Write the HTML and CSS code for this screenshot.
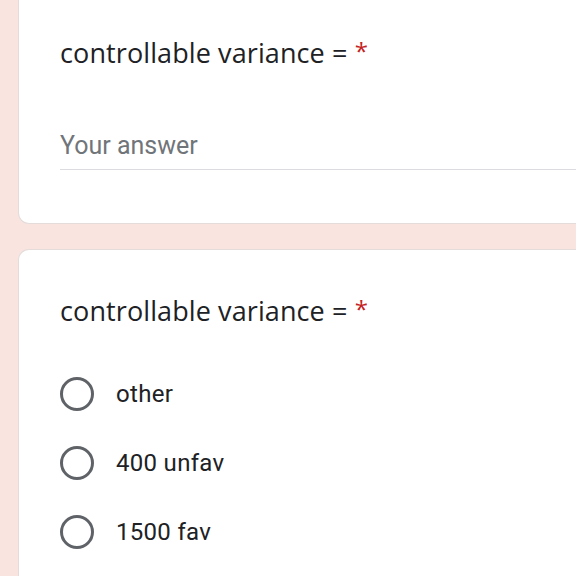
FILE: index.html
```html
<!DOCTYPE html>
<html>
<head>
<meta charset="utf-8">
<link rel="stylesheet" href="styles.css">
</head>
<body>
<div class="page">
  <div class="card card-first">
    <div class="title">controllable variance = <span class="req">*</span></div>
    <div class="answer">Your answer</div>
  </div>
  <div class="card card-second">
    <div class="title">controllable variance = <span class="req">*</span></div>
    <div class="options">
      <div class="option"><span class="radio"></span><span class="label">other</span></div>
      <div class="option"><span class="radio"></span><span class="label">400 unfav</span></div>
      <div class="option"><span class="radio"></span><span class="label">1500 fav</span></div>
    </div>
  </div>
</div>
</body>
</html>
```
FILE: styles.css
```css
html, body {
  margin: 0;
  padding: 0;
  background: #f9e4e0;
  overflow: hidden;
}
.page {
  width: 576px;
  height: 600px;
  overflow: hidden;
  display: flex;
  flex-direction: column;
  gap: 25px;
  padding-left: 18px;
  box-sizing: border-box;
  margin-top: -20px;
}
.card {
  background: #ffffff;
  border: 1.5px solid #e3dcda;
  border-right: none;
  border-radius: 11px 0 0 11px;
  padding-left: 41px;
  flex-shrink: 0;
  box-sizing: border-box;
}
.card-first {
  height: 244px;
  padding-top: 53px;
}
.card-second {
  padding-top: 42px;
  height: 440px;
  border-bottom: none;
}
.title {
  font-family: "Open Sans", sans-serif;
  font-size: 27px;
  color: #202124;
  line-height: 34px;
  letter-spacing: 0.1px;
}
.req {
  color: #c5221f;
  font-size: 24px;
  vertical-align: 3px;
}
.answer {
  margin-top: 60px;
  font-family: Roboto, sans-serif;
  font-size: 25px;
  color: #70757a;
  line-height: 32px;
  padding-bottom: 7px;
  border-bottom: 1.5px solid #dadce0;
}
.options {
  margin-top: 49px;
  display: flex;
  flex-direction: column;
  gap: 35px;
}
.option {
  display: flex;
  align-items: center;
  height: 34px;
}
.radio {
  width: 28px;
  height: 28px;
  border: 3px solid #5f6368;
  border-radius: 50%;
  flex-shrink: 0;
}
.label {
  margin-left: 22px;
  font-family: Roboto, sans-serif;
  font-size: 24px;
  color: #202124;
  letter-spacing: 0.3px;
}
```
